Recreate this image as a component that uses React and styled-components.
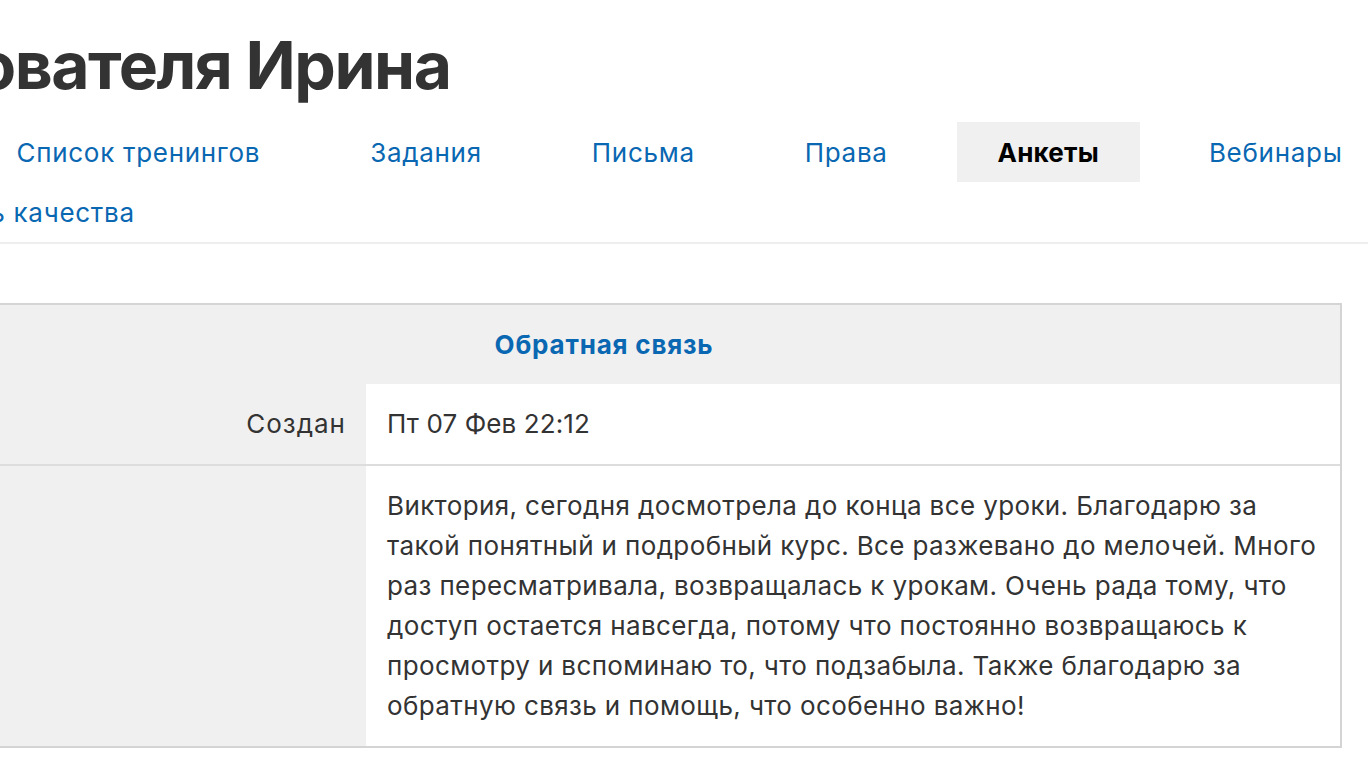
import React from "react";
import styled, { createGlobalStyle } from "styled-components";

const Global = createGlobalStyle`
  html, body { margin: 0; padding: 0; background: #fff; overflow: hidden; }
  body { font-family: Inter, "Noto Sans", "DejaVu Sans", sans-serif; color: #333; }
`;

const Page = styled.div`
  width: 1476px;
  margin-left: -134px;
`;

const Title = styled.h1`
  margin: 0;
  padding: 20px 0 0 0;
  font-size: 66px;
  line-height: 90px;
  font-weight: 700;
  color: #333;
  letter-spacing: -1.5px;
  white-space: nowrap;
  margin-left: ${(p) => p.$offset}px;
`;

const Nav = styled.nav`
  display: flex;
  flex-wrap: wrap;
  column-gap: 28px;
  width: 1720px;
  margin-top: 12px;
  margin-left: ${(p) => p.$offset}px;
  border-bottom: 2px solid #eeeeee;
`;

const Tab = styled.a`
  display: block;
  padding: 0 41px;
  height: 60px;
  line-height: 62px;
  font-size: 26px;
  letter-spacing: ${(p) => (p.$active ? "0.2px" : "0.7px")};
  white-space: nowrap;
  text-decoration: none;
  color: ${(p) => (p.$active ? "#000" : "#0a67b2")};
  font-weight: ${(p) => (p.$active ? 700 : 400)};
  background: ${(p) => (p.$active ? "#f0f0f0" : "transparent")};
`;

const Table = styled.div`
  margin-top: 59px;
  display: grid;
  grid-template-columns: 498px minmax(0, 1fr);
  border: 2px solid #d4d4d4;
  font-size: 26px;
  letter-spacing: 1px;
`;

const HeadCell = styled.div`
  grid-column: 1 / -1;
  background: #f0f0f0;
  height: 79px;
  display: flex;
  align-items: center;
  justify-content: center;
  font-weight: 700;
  letter-spacing: 0.8px;
  color: #0a67b2;
`;

const Label = styled.div`
  background: #f0f0f0;
  text-align: right;
  padding: 20px 20px;
  line-height: 40px;
  color: #333;
  border-top: ${(p) => (p.$sep ? "2px solid #dddddd" : "none")};
`;

const Value = styled.div`
  background: #fff;
  padding: 20px 20px 20px 21px;
  line-height: 40px;
  color: #333;
  letter-spacing: ${(p) => (p.$tight ? "0.1px" : "0.38px")};
  border-top: ${(p) => (p.$sep ? "2px solid #dddddd" : "none")};
`;

const Line = styled.span`
  display: block;
  white-space: nowrap;
`;

const tabsRow = [
  "Профиль",
  "Список тренингов",
  "Задания",
  "Письма",
  "Права",
  "Анкеты",
  "Вебинары",
  "Отчёт: контроль качества",
];

const feedback = [
  "Виктория, сегодня досмотрела до конца все уроки. Благодарю за",
  "такой понятный и подробный курс. Все разжевано до мелочей. Много",
  "раз пересматривала, возвращалась к урокам. Очень рада тому, что",
  "доступ остается навсегда, потому что постоянно возвращаюсь к",
  "просмотру и вспоминаю то, что подзабыла. Также благодарю за",
  "обратную связь и помощь, что особенно важно!",
];

export default function App() {
  return (
    <>
      <Global />
      <Page>
        <Title $offset={-336}>Анкеты пользователя Ирина</Title>
        <Nav $offset={-119}>
          {tabsRow.map((t) => (
            <Tab key={t} $active={t === "Анкеты"} href="#">
              {t}
            </Tab>
          ))}
        </Nav>
        <Table>
          <HeadCell>Обратная связь</HeadCell>
          <Label>Создан</Label>
          <Value $tight>Пт 07 Фев 22:12</Value>
          <Label $sep></Label>
          <Value $sep>
            {feedback.map((l, i) => (
              <Line key={i}>{l} </Line>
            ))}
          </Value>
        </Table>
      </Page>
    </>
  );
}
